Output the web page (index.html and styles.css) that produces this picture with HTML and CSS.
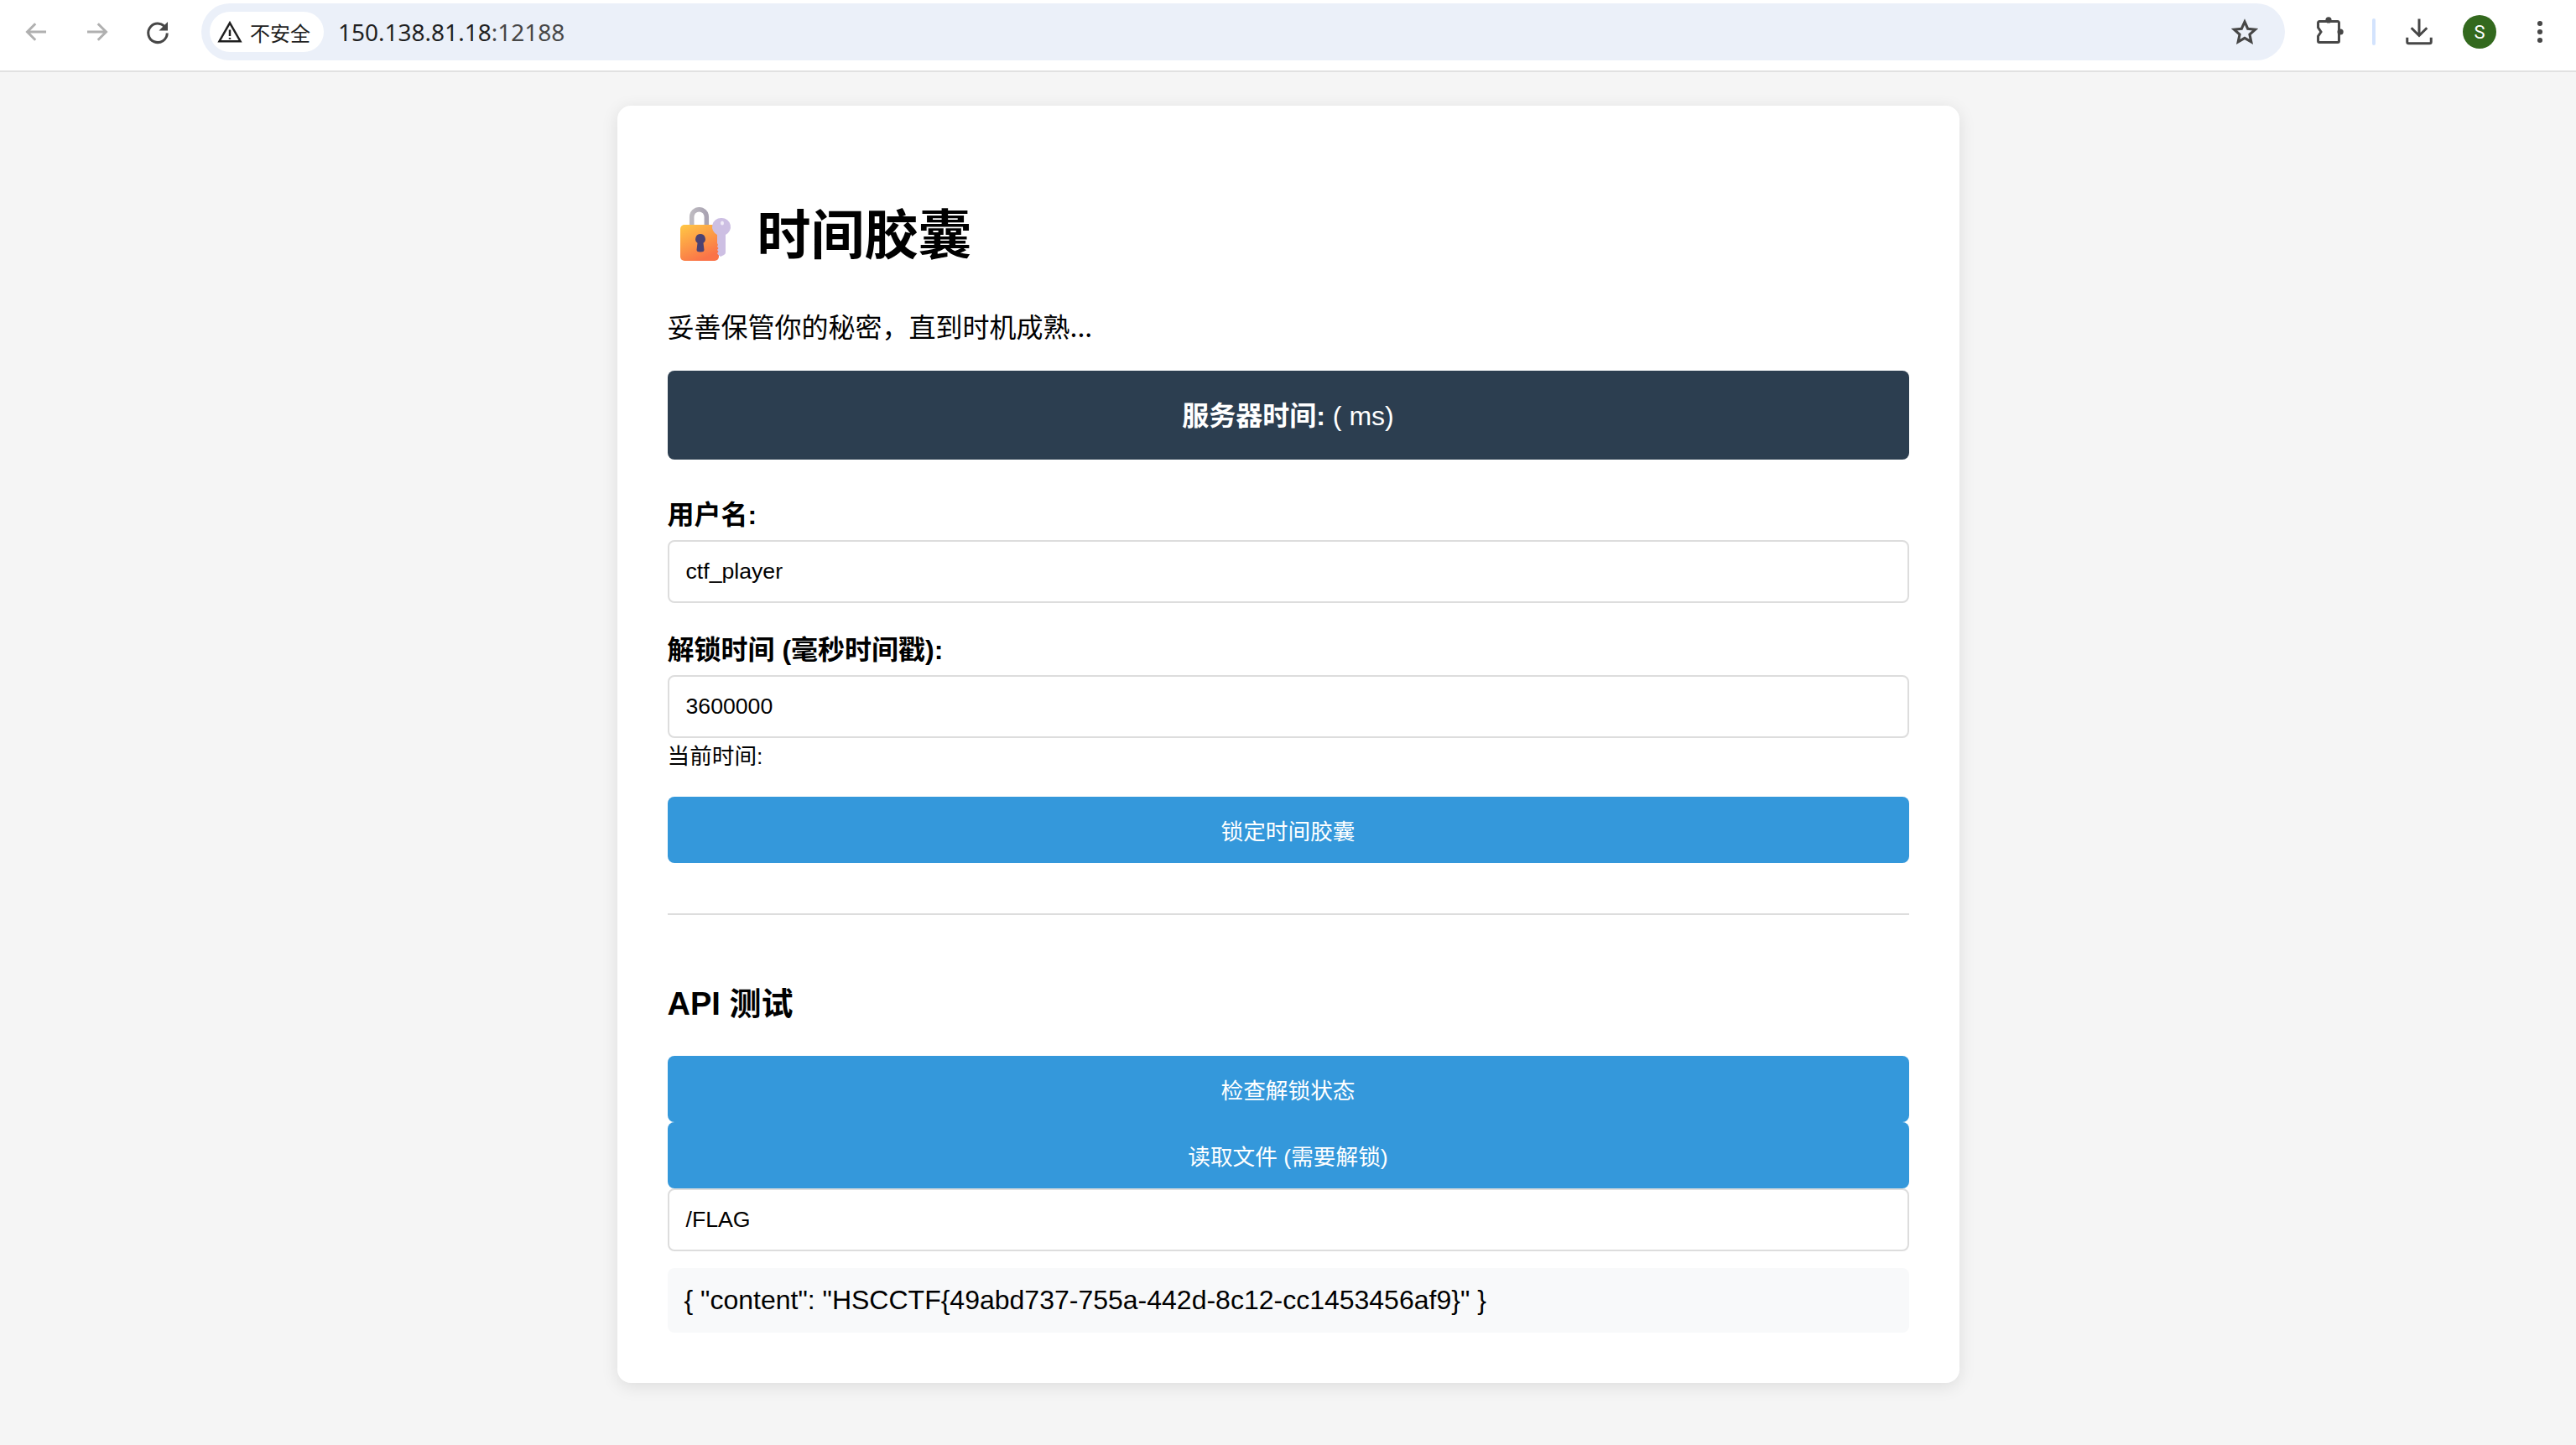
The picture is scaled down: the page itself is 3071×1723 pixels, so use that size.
FILE: index.html
```html
<!DOCTYPE html>
<html lang="zh-CN">
<head>
<meta charset="utf-8">
<title>时间胶囊</title>
<link rel="stylesheet" href="styles.css">
</head>
<body>
<header class="toolbar">
  <svg class="nav-icon back" viewBox="0 0 24 24"><path d="M20 12H5M11.500 5.500 5 12l6.500 6.500"/></svg>
  <svg class="nav-icon forward" viewBox="0 0 24 24"><path d="M4 12h15M12.500 5.500 19 12l-6.500 6.500"/></svg>
  <svg class="nav-icon reload" viewBox="0 0 24 24"><path d="M18.700 9.500A7.500 7.500 0 1 0 19.500 13"/><path class="fill" d="M20 4v7h-7z"/></svg>
  <div class="omnibox">
    <div class="chip">
      <svg class="warn" viewBox="0 0 24 24"><path d="M12 3.500 22 21H2z"/><path d="M12 10v6M12 17.500v1.500"/></svg>
      <span>不安全</span>
    </div>
    <span class="url">150.138.81.18<span class="port">:12188</span></span>
    <svg class="star" viewBox="0 0 24 24"><path d="m12 3.500 2.600 5.800 6.300.7-4.700 4.200 1.300 6.200-5.500-3.200-5.500 3.200 1.300-6.200L3.100 10l6.300-.7z"/></svg>
  </div>
  <svg class="tool puzzle" viewBox="0 0 24 24"><path d="M4.700 3.700H19.300a1 1 0 0 1 1 1V19.300a1 1 0 0 1-1 1H4.700a1 1 0 0 1-1-1V15.500L6 12 3.700 8.500V4.700a1 1 0 0 1 1-1z"/><circle class="knob" cx="12" cy="2.600" r="2.400"/><circle class="knob" cx="21.400" cy="12" r="2.400"/></svg>
  <span class="divider"></span>
  <svg class="tool download" viewBox="0 0 24 24"><path d="M12 1.600V15M5.800 8.800 12 15l6.200-6.200M2.500 16.500V20q0 1.200 1.200 1.200h16.600q1.200 0 1.200-1.200v-3.500"/></svg>
  <span class="avatar">S</span>
  <svg class="menu" viewBox="0 0 24 24"><circle cx="12" cy="4.500" r="2.300"/><circle cx="12" cy="12" r="2.300"/><circle cx="12" cy="19.500" r="2.300"/></svg>
</header>
<main class="card">
  <h1 class="title">
    <svg class="emoji" viewBox="0 0 80 80">
      <defs>
        <linearGradient id="body" x1="0" y1="0" x2="0.500" y2="1"><stop offset="0" stop-color="#ffc845"/><stop offset="1" stop-color="#fa7348"/></linearGradient>
        <linearGradient id="shackle" x1="0" y1="0" x2="1" y2="0"><stop offset="0" stop-color="#bdbac0"/><stop offset="1" stop-color="#a9a3b2"/></linearGradient>
      </defs>
      <path d="M24.700 34V19.500a8.800 8.800 0 0 1 17.600 0V34" fill="none" stroke="url(#shackle)" stroke-width="5.500"/>
      <rect x="11" y="29" width="46" height="43" rx="5" fill="url(#body)"/>
      <path d="M35 40a6 6 0 0 1 3.500 10.800L39.500 59q0 2.500-4.500 2.500T30.500 59l1-8.200A6 6 0 0 1 35 40z" fill="#4b4272"/>
      <path d="M60.500 21a10.500 10.500 0 0 1 4.500 20V62q0 2-2 3l-4 2q-3-1.500-4-4l1.500-2-1.500-2 1.500-2-1.500-2 1-2-1-2V41a10.500 10.500 0 0 1 4.500-20z" fill="#cdbfe3"/>
      <ellipse cx="61" cy="27" rx="2" ry="2.500" fill="#f1ecf8"/>
    </svg>
    <span>时间胶囊</span>
  </h1>
  <p class="subtitle">妥善保管你的秘密，直到时机成熟...</p>
  <div class="server-time"><strong>服务器时间:</strong> ( ms)</div>
  <label class="field-label">用户名:</label>
  <div class="input">ctf_player</div>
  <label class="field-label second">解锁时间 (毫秒时间戳):</label>
  <div class="input">3600000</div>
  <small class="hint">当前时间:</small>
  <div class="btn lock">锁定时间胶囊</div>
  <hr class="rule">
  <h2 class="section">API 测试</h2>
  <div class="btn">检查解锁状态</div>
  <div class="btn">读取文件 (需要解锁)</div>
  <div class="input">/FLAG</div>
  <div class="result">{ "content": "HSCCTF{49abd737-755a-442d-8c12-cc1453456af9}" }</div>
</main>
</body>
</html>
```
FILE: styles.css
```css
* { box-sizing: border-box; }
html, body { margin: 0; height: 1723px; overflow: hidden; }
body {
  background: #f5f5f5;
  color: #000;
  font-family: "Liberation Sans", "Noto Sans CJK SC", sans-serif;
}
.toolbar {
  height: 86px;
  background: #fff;
  border-bottom: 2px solid #e1e1e1;
  display: flex;
  align-items: center;
  padding: 0 27px 8px 25px;
}
.nav-icon { width: 36px; height: 36px; fill: none; stroke-width: 2; }
.nav-icon.back, .nav-icon.forward { stroke: #b0b0b0; }
.nav-icon.forward { margin-left: 37px; }
.nav-icon.reload { margin-left: 36px; stroke: #474747; }
.nav-icon .fill { fill: #474747; stroke: none; }
.omnibox {
  flex: 1;
  height: 68px;
  margin-left: 34px;
  background: #ebf0f9;
  border-radius: 34px;
  display: flex;
  align-items: center;
  padding: 0 31px 0 10px;
}
.chip {
  height: 48px;
  background: #fff;
  border-radius: 24px;
  display: flex;
  align-items: center;
  gap: 9px;
  padding: 0 16px 0 9px;
  font-size: 24px;
  font-family: "Noto Sans CJK SC", sans-serif;
  color: #1f1f1f;
}
.warn { width: 30px; height: 30px; fill: none; stroke: #1f1f1f; stroke-width: 2; }
.url { margin-left: 17px; font-size: 28px; color: #1f1f1f; font-family: "Noto Sans", sans-serif; flex: 1; }
.port { color: #474747; }
.star { width: 34px; height: 34px; fill: none; stroke: #474747; stroke-width: 2.200; }
.tool { width: 36px; height: 36px; fill: none; stroke: #474747; stroke-width: 2; }
.knob { fill: #474747; stroke: none; }
.puzzle { margin-left: 34px; }
.divider { width: 4px; height: 32px; margin-left: 34px; background: #d3e3fd; border-radius: 2px; }
.download { margin-left: 34px; }
.avatar {
  width: 40px;
  height: 40px;
  margin-left: 34px;
  border-radius: 50%;
  background: #33691e;
  color: #fff;
  font-size: 22px;
  display: flex;
  align-items: center;
  justify-content: center;
  font-family: "Roboto", sans-serif;
}
.menu { width: 32px; height: 32px; margin-left: 36px; fill: #474747; }
.card {
  width: 1600px;
  height: 1523px;
  margin: 40px auto 0;
  padding: 60px;
  background: #fff;
  border-radius: 16px;
  box-shadow: 0 4px 20px rgba(0, 0, 0, 0.1);
}
.title {
  margin: 43px 0 0;
  height: 92px;
  font-size: 64px;
  font-weight: 700;
  display: flex;
  align-items: center;
  gap: 23px;
  font-family: "Noto Sans CJK SC", sans-serif;
}
.emoji { width: 80px; height: 80px; margin: 8px 0 0 4px; }
.subtitle { margin: 45px 0 0; font-size: 32px; line-height: 44px; font-family: "Noto Sans CJK SC", sans-serif; }
.server-time {
  margin-top: 32px;
  height: 106px;
  background: #2c3e50;
  color: #fff;
  border-radius: 8px;
  font-size: 32px;
  line-height: 108px;
  text-align: center;
}
.field-label { display: block; margin-top: 44px; font-size: 32px; font-weight: 700; line-height: 44px; }
.field-label.second { margin-top: 34px; }
.input {
  margin-top: 8px;
  height: 75px;
  border: 2px solid #ddd;
  border-radius: 8px;
  background: #fff;
  padding: 0 20px;
  font-size: 26.67px;
  display: flex;
  align-items: center;
}
.hint { display: block; font-size: 26.67px; line-height: 36px; margin-top: 4px; }
.btn {
  height: 79px;
  background: #3498db;
  color: #fff;
  border-radius: 8px;
  font-size: 26.67px;
  display: flex;
  align-items: center;
  justify-content: center;
}
.btn.lock { margin-top: 30px; }
.rule { margin: 60px 0 0; border: 0; border-top: 2px solid #ddd; }
.section { margin: 68px 0 0; font-size: 38px; line-height: 76px; font-weight: 700; height: 100px; }
.btn + .input { margin-top: 0; }
.result {
  margin-top: 20px;
  height: 77px;
  background: #f8f9fa;
  border-radius: 8px;
  padding: 0 20px;
  font-size: 32px;
  display: flex;
  align-items: center;
}
```
